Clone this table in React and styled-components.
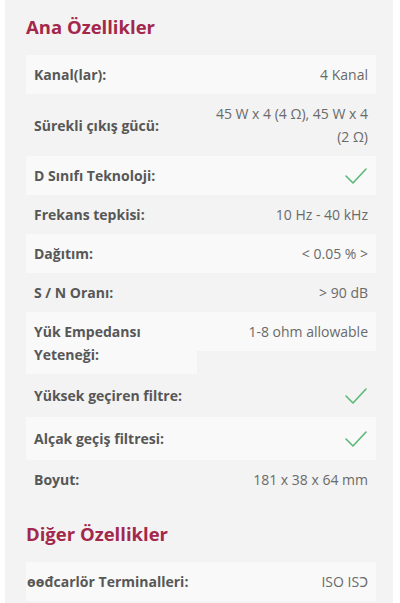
import React from 'react';
import styled, {createGlobalStyle} from 'styled-components';

const GlobalStyle = createGlobalStyle`
  html, body {
    margin: 0;
    padding: 0;
    background: #ffffff;
  }
  body {
    font-family: "Open Sans", "Noto Sans", sans-serif;
  }
`;

const Page = styled.div`
  padding: 0 7px 0 5px;
  height: 603px;
  overflow: hidden;
`;

const Card = styled.div`
  background: #f3f3f3;
  padding: 9px 17px 20px 21px;
  min-height: 603px;
  box-sizing: border-box;
`;

const Title = styled.h2`
  margin: 0;
  color: #a3284b;
  font-size: 18.5px;
  font-weight: 700;
  line-height: 36px;
  padding-bottom: 10px;

  &.spaced {
    padding-top: 17px;
  }
`;

const Table = styled.div`
  display: flex;
  flex-direction: column;
`;

const Row = styled.div`
  display: grid;
  grid-template-columns: 171px 1fr;
  align-items: ${p => (p.$top ? 'start' : 'stretch')};
`;

const Cell = styled.div`
  background: ${p => (p.$shaded ? '#f9f9f9' : 'transparent')};
  padding: ${p => (p.$roomy ? '10px 8px' : '8px')};
  font-size: 14px;
  line-height: 23px;
  display: flex;
  align-items: center;
`;

const Label = styled(Cell)`
  color: #575757;
  font-weight: 700;
`;

const Value = styled(Cell)`
  color: #6a6a6a;
  justify-content: flex-end;
  text-align: right;
`;

const Check = () => (
  <svg width="24" height="18" viewBox="0 0 24 18" fill="none">
    <polyline
      points="2,9 9,16 22,2"
      stroke="#5cb877"
      strokeWidth="1.6"
      strokeLinecap="round"
      strokeLinejoin="round"
    />
  </svg>
);

const mainSpecs = [
  {label: 'Kanal(lar):', value: '4 Kanal'},
  {label: 'Sürekli çıkış gücü:', value: '45 W x 4 (4 Ω), 45 W x 4 (2 Ω)'},
  {label: 'D Sınıfı Teknoloji:', check: true},
  {label: 'Frekans tepkisi:', value: '10 Hz - 40 kHz'},
  {label: 'Dağıtım:', value: '< 0.05 % >'},
  {label: 'S / N Oranı:', value: '> 90 dB'},
  {label: 'Yük Empedansı Yeteneği:', value: '1-8 ohm allowable', top: true},
  {label: 'Yüksek geçiren filtre:', check: true, roomy: true},
  {label: 'Alçak geçiş filtresi:', check: true, roomy: true},
  {label: 'Boyut:', value: '181 x 38 x 64 mm'},
];

function SpecTable({specs}) {
  return (
    <Table>
      {specs.map((s, i) => {
        const shaded = i % 2 === 0;
        return (
          <Row key={s.label} $top={s.top}>
            <Label $shaded={shaded} $roomy={s.roomy}>{s.label}</Label>
            <Value $shaded={shaded} $roomy={s.roomy}>{s.check ? <Check/> : s.value}</Value>
          </Row>
        );
      })}
    </Table>
  );
}

const LastLabel = styled(Label)`
  padding-left: 1px;
`;

export default function App() {
  return (
    <>
      <GlobalStyle/>
      <Page>
        <Card>
          <Title>Ana Özellikler</Title>
          <SpecTable specs={mainSpecs}/>
          <Title className="spaced">Diğer Özellikler</Title>
          <Table>
            <Row>
              <LastLabel $shaded>ɵɵđcarlör Terminalleri:</LastLabel>
              <Value $shaded>ISO ISƆ</Value>
            </Row>
          </Table>
        </Card>
      </Page>
    </>
  );
}
